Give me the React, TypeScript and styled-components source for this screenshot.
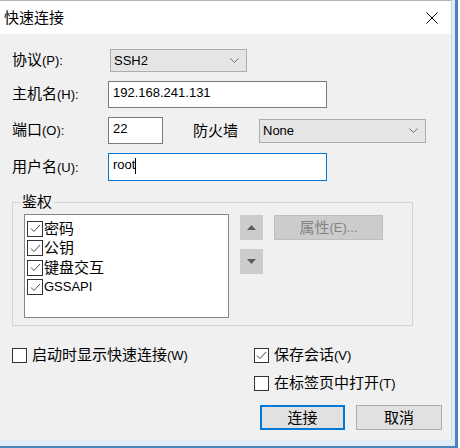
import React from "react";
import styled, { createGlobalStyle } from "styled-components";

const FONT = `"Liberation Sans", "Noto Sans CJK SC", sans-serif`;

const GlobalStyle = createGlobalStyle`
  html, body { margin: 0; padding: 0; background: #ffffff; }
  body { font-family: ${FONT}; color: #000; }
  * { box-sizing: border-box; }
`;

const Frame = styled.div`
  width: 458px;
  height: 448px;
  display: flex;
  flex-direction: column;
  background: #dfebf6;
  padding: 0 3px 6px 0;
  border-right: 3px solid #4a85bf;
  border-bottom: 2px solid #4a85bf;
`;

const Inner = styled.div`
  flex: 1;
  display: flex;
  flex-direction: column;
  border-top: 1px solid #b4b4b4;
  border-right: 1px solid #d4d4d4;
`;

const TitleBar = styled.div`
  height: 33px;
  background: #ffffff;
  display: flex;
  align-items: center;
  justify-content: space-between;
  padding: 0 13px 0 4px;
`;

const Title = styled.span`
  font-size: 15px;
  line-height: 18px;
  color: #000;
`;

const Body = styled.div`
  flex: 1;
  background: #f0f0f0;
  padding: 15px 0 0 12px;
  display: flex;
  flex-direction: column;
`;

const Form = styled.div`
  display: flex;
  flex-direction: column;
  gap: 9px;
`;

const Row = styled.div<{ $h: number }>`
  display: flex;
  align-items: center;
  height: ${(p) => p.$h}px;
`;

const FieldLabel = styled.span<{ $w: number; $ml?: number }>`
  width: ${(p) => p.$w}px;
  margin-left: ${(p) => p.$ml ?? 0}px;
  flex: none;
  font-size: 15px;
  line-height: 18px;
`;

const Key = styled.span`
  font-size: 13px;
`;

const TextBox = styled.div<{ $w: number; $h: number; $focus?: boolean }>`
  width: ${(p) => p.$w}px;
  height: ${(p) => p.$h}px;
  background: #ffffff;
  border: 1px solid ${(p) => (p.$focus ? "#0078d7" : "#7a7a7a")};
  padding: 2px 4px 0;
  font-size: 13px;
  line-height: 18px;
  display: flex;
  align-items: flex-start;
`;

const Caret = styled.span`
  display: inline-block;
  width: 1px;
  height: 16px;
  margin-top: 2px;
  background: #000;
`;

const Combo = styled.div<{ $w: number; $h: number; $ml?: number }>`
  width: ${(p) => p.$w}px;
  height: ${(p) => p.$h}px;
  margin-left: ${(p) => p.$ml ?? 0}px;
  background: #e5e5e5;
  border: 1px solid #adadad;
  padding: 0 7px 0 3px;
  display: flex;
  align-items: center;
  justify-content: space-between;
  font-size: 13px;
  line-height: 18px;
`;

const Group = styled.fieldset`
  width: 401px;
  margin: 13px 0 0 0;
  border: 1px solid #d5d5d5;
  padding: 4px 11px 7px 11px;
  display: flex;
  align-items: flex-start;
`;

const Legend = styled.legend`
  font-size: 15px;
  line-height: 16px;
  padding: 0 2px;
  margin-left: -4px;
`;

const ListBox = styled.div`
  width: 205px;
  height: 104px;
  flex: none;
  background: #ffffff;
  border: 1px solid #828790;
  padding: 4px 0 0 2px;
`;

const ListItem = styled.div<{ $latin?: boolean }>`
  height: 19.5px;
  display: flex;
  align-items: center;
  gap: 1px;
  font-size: ${(p) => (p.$latin ? 13 : 15)}px;
  line-height: 18px;
`;

const Box = styled.span<{ $size: number }>`
  width: ${(p) => p.$size}px;
  height: ${(p) => p.$size}px;
  flex: none;
  border: 1px solid #333333;
  background: #ffffff;
  display: flex;
  align-items: center;
  justify-content: center;
`;

const ArrowCol = styled.div`
  display: flex;
  flex-direction: column;
  gap: 9px;
  margin: 1px 0 0 11px;
`;

const ArrowButton = styled.div`
  width: 23px;
  height: 25px;
  background: #cccccc;
  display: flex;
  align-items: center;
  justify-content: center;
`;

const PushButton = styled.div<{ $w: number; $variant?: "default" | "disabled" }>`
  width: ${(p) => p.$w}px;
  height: 25px;
  flex: none;
  display: flex;
  align-items: center;
  justify-content: center;
  font-size: 15px;
  line-height: 18px;
  background: ${(p) => (p.$variant === "disabled" ? "#cccccc" : "#e1e1e1")};
  color: ${(p) => (p.$variant === "disabled" ? "#838383" : "#000")};
  border: ${(p) =>
    p.$variant === "default"
      ? "2px solid #0078d7"
      : p.$variant === "disabled"
      ? "1px solid #bfbfbf"
      : "1px solid #adadad"};
`;

const PropsButton = styled(PushButton)`
  margin: 1px 0 0 11px;
`;

const Bottom = styled.div`
  display: flex;
  margin-top: 19px;
`;

const LeftCol = styled.div`
  width: 242px;
  flex: none;
`;

const RightCol = styled.div`
  display: flex;
  flex-direction: column;
`;

const CheckRow = styled.div<{ $mt?: number }>`
  display: flex;
  align-items: center;
  gap: 5px;
  height: 20px;
  margin-top: ${(p) => p.$mt ?? 0}px;
  font-size: 15px;
  line-height: 18px;
`;

const ButtonRow = styled.div`
  display: flex;
  gap: 11px;
  margin: 12px 0 0 6px;
`;

const Check = () => (
  <svg width="11" height="9" viewBox="0 0 11 9">
    <polyline points="1,4.5 4,7.5 10,1" fill="none" stroke="#4a4a4a" strokeWidth="1" />
  </svg>
);

const Chevron = () => (
  <svg width="9" height="5" viewBox="0 0 9 5">
    <polyline points="0.5,0.5 4.5,4.5 8.5,0.5" fill="none" stroke="#6a6a6a" strokeWidth="1" />
  </svg>
);

const CloseIcon = () => (
  <svg width="12" height="12" viewBox="0 0 12 12">
    <line x1="0.5" y1="0.5" x2="11.5" y2="11.5" stroke="#000" strokeWidth="1" />
    <line x1="11.5" y1="0.5" x2="0.5" y2="11.5" stroke="#000" strokeWidth="1" />
  </svg>
);

const Triangle = ({ up }: { up?: boolean }) => (
  <svg width="9" height="5" viewBox="0 0 9 5">
    <polygon points={up ? "0,5 9,5 4.5,0" : "0,0 9,0 4.5,5"} fill="#5c5c5c" />
  </svg>
);

const CheckBox = ({ checked, size = 15 }: { checked?: boolean; size?: number }) => (
  <Box $size={size}>{checked ? <Check /> : null}</Box>
);

const authItems = [
  { label: "密码", latin: false },
  { label: "公钥", latin: false },
  { label: "键盘交互", latin: false },
  { label: "GSSAPI", latin: true },
];

export default function App() {
  return (
    <>
      <GlobalStyle />
      <Frame>
        <Inner>
          <TitleBar>
            <Title>快速连接</Title>
            <CloseIcon />
          </TitleBar>
          <Body>
            <Form>
              <Row $h={23}>
                <FieldLabel $w={98}>
                  协议<Key>(P):</Key>
                </FieldLabel>
                <Combo $w={137} $h={23}>
                  SSH2
                  <Chevron />
                </Combo>
              </Row>
              <Row $h={27}>
                <FieldLabel $w={96}>
                  主机名<Key>(H):</Key>
                </FieldLabel>
                <TextBox $w={219} $h={27}>192.168.241.131</TextBox>
              </Row>
              <Row $h={27}>
                <FieldLabel $w={96}>
                  端口<Key>(O):</Key>
                </FieldLabel>
                <TextBox $w={55} $h={27}>22</TextBox>
                <FieldLabel $w={66} $ml={30}>
                  防火墙
                </FieldLabel>
                <Combo $w={167} $h={24}>
                  None
                  <Chevron />
                </Combo>
              </Row>
              <Row $h={28}>
                <FieldLabel $w={96}>
                  用户名<Key>(U):</Key>
                </FieldLabel>
                <TextBox $w={219} $h={28} $focus>
                  root
                  <Caret />
                </TextBox>
              </Row>
            </Form>

            <Group>
              <Legend>鉴权</Legend>
              <ListBox>
                {authItems.map((item) => (
                  <ListItem key={item.label} $latin={item.latin}>
                    <CheckBox checked size={16} />
                    {item.label}
                  </ListItem>
                ))}
              </ListBox>
              <ArrowCol>
                <ArrowButton>
                  <Triangle up />
                </ArrowButton>
                <ArrowButton>
                  <Triangle />
                </ArrowButton>
              </ArrowCol>
              <PropsButton $w={109} $variant="disabled">
                属性<Key>(E)...</Key>
              </PropsButton>
            </Group>

            <Bottom>
              <LeftCol>
                <CheckRow>
                  <CheckBox />
                  <span>
                    启动时显示快速连接<Key>(W)</Key>
                  </span>
                </CheckRow>
              </LeftCol>
              <RightCol>
                <CheckRow>
                  <CheckBox checked />
                  <span>
                    保存会话<Key>(V)</Key>
                  </span>
                </CheckRow>
                <CheckRow $mt={8}>
                  <CheckBox />
                  <span>
                    在标签页中打开<Key>(T)</Key>
                  </span>
                </CheckRow>
                <ButtonRow>
                  <PushButton $w={85} $variant="default">
                    连接
                  </PushButton>
                  <PushButton $w={86}>取消</PushButton>
                </ButtonRow>
              </RightCol>
            </Bottom>
          </Body>
        </Inner>
      </Frame>
    </>
  );
}
